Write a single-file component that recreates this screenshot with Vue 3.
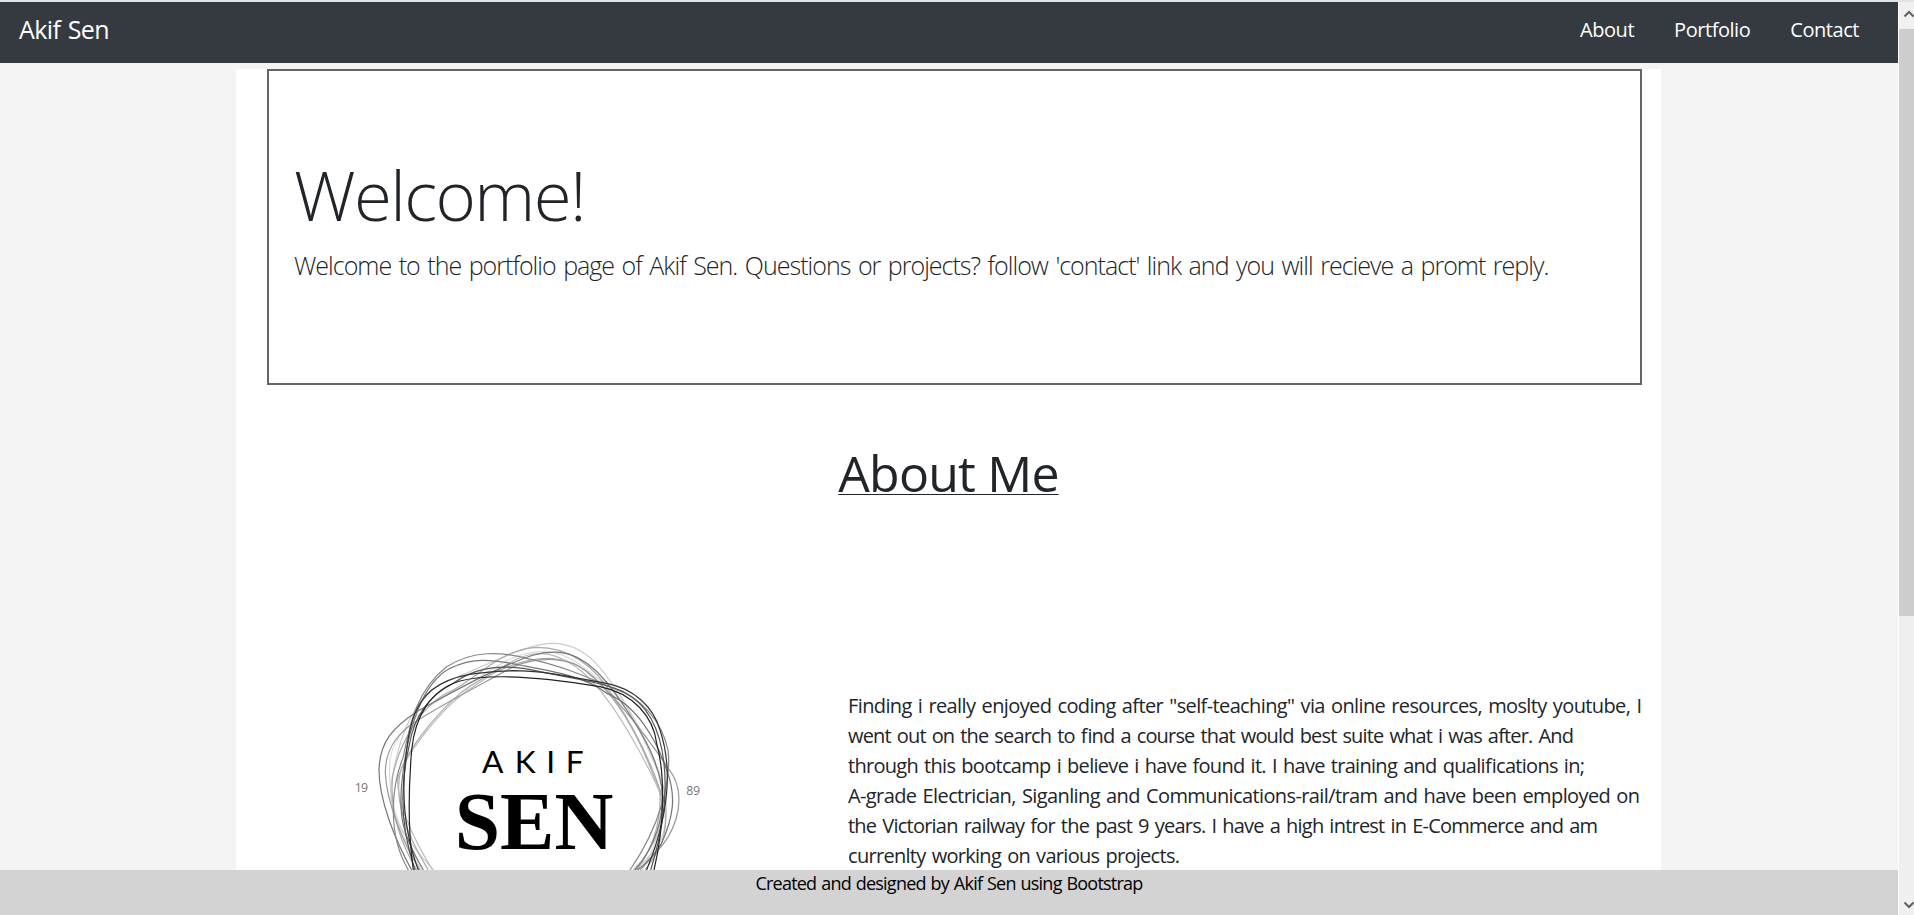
<script setup>
const links = [
  { label: 'About', cls: 'l-about' },
  { label: 'Portfolio', cls: 'l-portfolio' },
  { label: 'Contact', cls: 'l-contact' },
]
const bio = [
  { text: 'Finding i really enjoyed coding after "self-teaching" via online resources, moslty youtube, I', w: 794 },
  { text: 'went out on the search to find a course that would best suite what i was after. And', w: 726 },
  { text: 'through this bootcamp i believe i have found it. I have training and qualifications in;', w: 737 },
  { text: 'A-grade Electrician, Siganling and Communications-rail/tram and have been employed on', w: 792 },
  { text: 'the Victorian railway for the past 9 years. I have a high intrest in E-Commerce and am', w: 750 },
  { text: 'currenlty working on various projects.', w: 332 },
]
const rings = [
  { c: '#ddd', d: 'M245 720C180 620 140 500 150 390C160 310 240 240 330 190C430 150 500 60 620 64C700 70 760 140 800 165C860 205 920 330 960 430C980 560 950 650 905 720' },
  { c: '#ccc', d: 'M280 720C180 610 140 540 155 450C170 370 200 200 330 150C480 90 560 40 640 40C740 42 790 120 850 210C900 300 940 390 965 450C990 540 980 610 950 650C930 680 900 710 880 720' },
  { c: '#aaa', d: 'M265 720C190 600 165 500 180 430C195 370 280 260 360 190C440 130 560 75 650 87C700 92 740 120 770 150C840 220 890 310 930 410C950 460 960 480 968 500C990 600 970 650 915 720' },
  { c: '#bbb', d: 'M278 720C210 610 175 520 172 450C180 400 300 230 400 170C480 120 520 75 600 70C680 72 750 135 810 220C860 290 920 400 952 470C985 540 960 640 880 720' },
  { c: '#aaa', d: 'M230 720C165 610 150 520 158 440C175 350 240 220 340 180C430 130 480 60 590 52C680 52 760 100 820 200C880 290 930 390 960 480C965 580 935 660 890 720' },
  { c: '#999', d: 'M240 720C190 640 140 520 136 430C135 350 180 300 250 260C350 200 420 165 520 110C600 78 690 80 740 125C820 190 900 290 985 415C1030 470 1025 550 985 620C960 660 930 690 900 720' },
  { c: '#777', d: 'M215 720C165 630 117 510 117 420C119 335 160 290 235 242C330 190 400 150 480 115C560 80 600 62 660 67C740 74 800 150 860 240C920 330 950 390 965 470C975 560 945 650 885 720' },
  { c: '#888', d: 'M205 720C145 620 150 480 190 380C210 280 230 180 320 110C400 60 480 65 560 85C660 105 740 140 820 175C900 200 965 270 984 360C995 450 960 590 870 720' },
  { c: '#777', d: 'M250 720C190 620 170 560 190 420C205 300 245 160 330 115C400 82 450 88 540 105C630 122 740 140 800 190C890 225 950 330 980 420C1010 500 1000 560 965 640C945 670 920 700 892 720' },
  { c: '#555', d: 'M225 720C180 590 178 470 208 345C222 260 262 200 340 160C420 100 520 105 600 125C700 145 790 158 850 185C920 220 960 290 972 400C985 520 960 630 932 720' },
  { c: '#333', d: 'M235 720C190 600 183 480 200 360C210 270 230 220 275 180C340 130 430 125 520 122C620 122 710 145 800 160C880 175 940 230 960 300C1000 420 985 560 920 720' },
  { c: '#222', d: 'M220 720C203 600 205 480 215 360C225 260 270 180 360 153C450 130 600 140 780 170C880 190 940 260 950 340C975 430 975 580 942 720' },
]
</script>

<template>
  <div class="window">
    <div class="view">
      <header class="navbar">
        <a class="brand"><span>Akif Sen</span></a>
        <nav>
          <a v-for="l in links" :key="l.label" :class="l.cls">{{ l.label }}</a>
        </nav>
      </header>
      <main class="container">
        <section class="jumbotron">
          <h1>Welcome!</h1>
          <p>Welcome to the portfolio page of Akif Sen. Questions or projects? follow 'contact' link and you will recieve a promt reply.</p>
        </section>
        <h2><span>About Me</span></h2>
        <section class="about">
          <svg class="logo" viewBox="0 0 1140 720" width="380" height="240">
            <g fill="none" stroke-width="3.6">
              <path v-for="(r, i) in rings" :key="i" :d="r.d" :stroke="r.c" />
            </g>
            <text class="akif" x="426 524 619 677" y="430">AKIF</text>
            <text class="sen" x="344" y="657" textLength="476" lengthAdjust="spacingAndGlyphs">SEN</text>
            <text class="year" x="44" y="487" textLength="40">19</text>
            <text class="year" x="1039" y="494" textLength="41">89</text>
          </svg>
          <div class="bio">
            <svg v-for="(b, i) in bio" :key="i" width="800" height="30">
              <text x="0" y="21" :textLength="b.w">{{ b.text }}</text>
            </svg>
          </div>
        </section>
      </main>
      <footer><span>Created and designed by Akif Sen using Bootstrap</span></footer>
    </div>
    <aside class="scrollbar">
      <svg width="15" height="27" viewBox="0 0 15 27"><path d="M5.5 14.5L10 10L14.5 14.5" /></svg>
      <div class="thumb"></div>
      <svg class="down" width="15" height="20" viewBox="0 0 15 20"><path d="M5.5 7.5L10 12L14.5 7.5" /></svg>
    </aside>
  </div>
</template>

<style>
body { margin: 0; overflow: hidden; }
</style>

<style scoped>
.window {
  box-sizing: border-box;
  width: 1914px;
  height: 915px;
  display: flex;
  border-top: 2px solid #dfe2e6;
  background: #fff;
  font-family: "Open Sans", "Noto Sans", sans-serif;
  color: #212529;
  overflow: hidden;
}
.view {
  width: 1898px;
  height: 913px;
  background: #f4f4f4;
  display: flex;
  flex-direction: column;
  margin-right: 1px;
}
.navbar {
  flex: none;
  height: 61px;
  box-sizing: border-box;
  background: #343a40;
  color: #fff;
  display: flex;
  justify-content: space-between;
  padding: 10px 39px 0 19px;
}
.brand { font-size: 25px; line-height: 35px; letter-spacing: -0.6px; word-spacing: 1.5px; }
nav { display: flex; gap: 40px; font-size: 20px; line-height: 36px; letter-spacing: -0.45px; }
.container {
  width: 1425px;
  height: 801px;
  margin: 6px 0 0 236px;
  background: #fff;
  overflow: hidden;
}
.jumbotron {
  box-sizing: border-box;
  width: 1375px;
  height: 316px;
  margin-left: 31px;
  border: 2px solid #666;
  padding: 78px 25px 0;
}
h1 { margin: 0; font-weight: 300; font-size: 69px; line-height: 90px; letter-spacing: -1.6px; white-space: nowrap; }
.jumbotron p { margin: 7px 0 0; font-weight: 300; font-size: 25px; line-height: 38px; letter-spacing: -0.98px; word-spacing: 2px; white-space: nowrap; }
h2 {
  margin: 53px 0 0;
  text-align: center;
  font-weight: 400;
  font-size: 50px;
  line-height: 70px;
  letter-spacing: -0.8px;
}
h2 span { text-decoration: underline; text-decoration-thickness: 1px; text-underline-offset: 2px; text-decoration-skip-ink: none; }
.about { display: flex; margin-top: 122px; }
.logo { flex: none; margin-left: 104px; }
.akif { font: 400 95px "Lato", sans-serif; fill: #000; }
.sen { font: 700 248px "Liberation Serif", serif; fill: #000; }
.year { font: 400 37px "Open Sans", sans-serif; fill: #777; }
.bio { display: flex; flex-direction: column; margin: 62px 0 0 128px; }
.bio svg { display: block; overflow: visible; font-size: 20px; word-spacing: 1.6px; fill: #212529; }
footer {
  flex: none;
  height: 45px;
  background: #d3d3d3;
  color: #000;
  text-align: center;
  font-size: 18px;
  line-height: 27px;
  letter-spacing: -0.77px;
  word-spacing: 0.9px;
}
.scrollbar { width: 15px; height: 913px; background: #f0f0f0; display: flex; flex-direction: column; }
.scrollbar svg { display: block; fill: none; stroke: #606060; stroke-width: 2; flex: none; }
.thumb { height: 587px; background: #cdcdcd; }
.scrollbar .down { margin-top: auto; }
</style>
